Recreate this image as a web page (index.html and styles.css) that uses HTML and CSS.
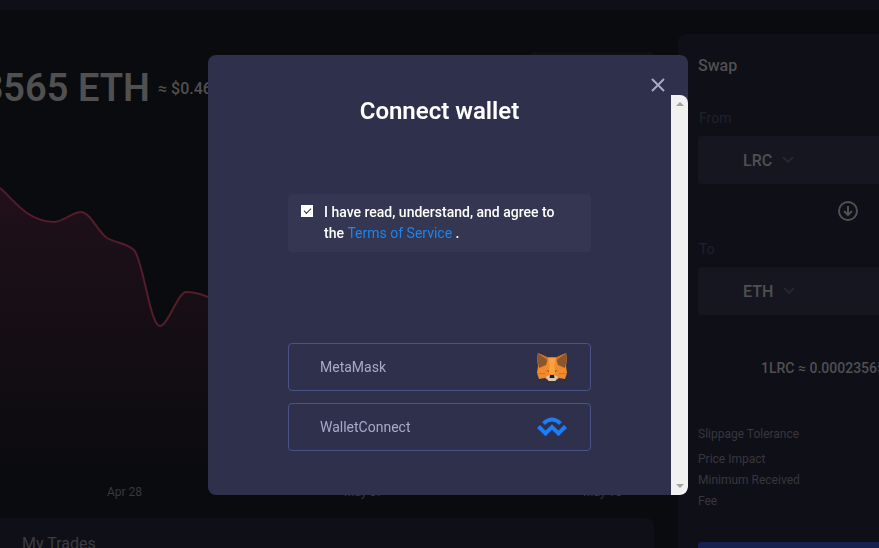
FILE: index.html
```html
<!DOCTYPE html>
<html lang="en">
<head>
  <meta charset="UTF-8" />
  <meta name="viewport" content="width=device-width, initial-scale=1.0" />
  <title>Connect wallet</title>
  <link rel="stylesheet" href="styles.css">
</head>
<body>

  <header class="topbar"></header>

  <main class="layout">
    <div class="market">
      <div class="range"></div>
      <div class="price">
        <strong>0.00023565 ETH</strong>
        <span>≈ $0.4621</span>
      </div>

      <!-- Price chart -->
      <svg class="chart" viewBox="0 0 654 348" preserveAspectRatio="none">
        <defs>
          <linearGradient id="fade" x1="0" y1="0" x2="0" y2="1">
            <stop offset="0" stop-color="#20101a" />
            <stop offset="1" stop-color="#0a0b0f" />
          </linearGradient>
        </defs>
        <path fill="url(#fade)" d="M0 56C9 64 18 75 27 81C36 87 45 90 54 90C63 90 72 80 81 80C90 80 98 100 107 106C116 111 127 111 134 118C143 127 150 194 160 194C168 194 178 160 186 160C194 160 201 162 208 165L654 165V348H0Z" />
        <path class="chart-line" d="M0 56C9 64 18 75 27 81C36 87 45 90 54 90C63 90 72 80 81 80C90 80 98 100 107 106C116 111 127 111 134 118C143 127 150 194 160 194C168 194 178 160 186 160C194 160 201 162 208 165" />
      </svg>
      <div class="axis">
        <span>Apr 28</span>
        <span>May 07</span>
        <span>May 16</span>
      </div>

      <section class="trades">
        <h2>My Trades</h2>
      </section>
    </div>

    <section class="swap">
      <h2>Swap</h2>
      <p class="side">From</p>
      <button class="token">LRC
        <svg width="12" height="8" viewBox="0 0 12 8"><path d="M1 1l5 5 5-5" /></svg>
      </button>
      <button class="switch" aria-label="Switch tokens">
        <svg width="20" height="20" viewBox="0 0 20 20"><circle cx="10" cy="10" r="9" /><path d="M10 5v9M6 10l4 4 4-4" /></svg>
      </button>
      <p class="side">To</p>
      <button class="token">ETH
        <svg width="12" height="8" viewBox="0 0 12 8"><path d="M1 1l5 5 5-5" /></svg>
      </button>
      <p class="rate">1LRC ≈ 0.00023565 ETH</p>
      <ul class="details">
        <li>Slippage Tolerance</li>
        <li>Price Impact</li>
        <li>Minimum Received</li>
        <li>Fee</li>
      </ul>
      <button class="submit" aria-label="Swap tokens"></button>
    </section>
  </main>

  <!-- Connect wallet modal -->
  <div class="overlay">
    <div class="modal" role="dialog" aria-labelledby="modal-title">
      <div class="modal-head">
        <button class="close" aria-label="Close">
          <svg width="14" height="14" viewBox="0 0 14 14"><path d="M1 1l12 12M13 1L1 13" /></svg>
        </button>
      </div>
      <div class="modal-body">
        <div class="modal-content">
          <h1 id="modal-title">Connect wallet</h1>
          <div class="agree">
            <input type="checkbox" id="agree" checked>
            <label for="agree">I have read, understand, and agree to the <a href="#">Terms of Service</a> .</label>
          </div>
          <div class="wallets">
            <button class="wallet">MetaMask
              <svg width="30" height="28" viewBox="0 0 30 28">
                <path fill="#f08a2c" d="M1 0l10 4.500h8L29 0l1 5-1 8 1 7-2 6-6-1-4 3h-6l-4-3-6 1-2-6 1-7-1-8z" />
                <path fill="#f9a03f" d="M11 4.500h8l-1.500 8L18 21h-6l.5-8.500z" />
                <path fill="#8a562b" d="M1 0l9.500 7-1.500 5-7 3L0 5zM29 0l-9.500 7 1.500 5 7 3L30 5z" />
                <path fill="#c9701f" d="M1 0l10 4.500-.5 2.500zM29 0L19 4.500l.5 2.500z" />
                <path fill="#d9731f" d="M0 20h8v1H0zM22 20h8v1h-8z" />
                <path fill="#4b4238" d="M9 17l3 1v1zM21 17l-3 1v1z" />
                <path fill="#d7c9bd" d="M9 24l3.500-2h5l3.500 2-3 4h-6z" />
                <path fill="#20201f" d="M13 22h4l.5 3h-5z" />
              </svg>
            </button>
            <button class="wallet">WalletConnect
              <svg width="30" height="20" viewBox="0 0 30 20">
                <path class="wc" d="M6.500 6.500Q15-1.500 23.500 6.500M1.500 9.500l7 7L15 10l6.500 6.500 7-7" />
              </svg>
            </button>
          </div>
        </div>
        <div class="scrollbar"><i class="up"></i><i class="down"></i></div>
      </div>
    </div>
  </div>

</body>
</html>
```
FILE: styles.css
```css
* {
  box-sizing: border-box;
}

body {
  margin: 0;
  min-height: 100vh;
  overflow: hidden;
  font-family: Roboto, 'Liberation Sans', sans-serif;
  font-size: 14px;
  background: #0a0b0f;
  color: #505050;
}

h1, h2, p, ul {
  margin: 0;
  padding: 0;
}

button {
  font: inherit;
  color: inherit;
  border: none;
  background: none;
  padding: 0;
  text-align: left;
}

svg {
  display: block;
  fill: none;
}

.topbar {
  height: 10px;
  background: #0f0f18;
}

/* the swap panel runs past the right edge of the window */
.layout {
  display: grid;
  grid-template-columns: minmax(0, 1fr) 340px;
  gap: 24px;
  height: calc(100vh - 10px);
  margin-right: -139px;
  overflow: hidden;
}

.market {
  padding-top: 42px;
}

.range {
  width: 124px;
  height: 12px;
  margin-left: auto;
  border-radius: 4px;
  background: #0f0f18;
}

.price {
  display: flex;
  align-items: center;
  gap: 8px;
  height: 48px;
  margin-left: -150px;
  white-space: nowrap;
}

.price strong {
  width: 300px;
  font-size: 38px;
  font-weight: 600;
  text-align: right;
}

.price span {
  font-size: 16px;
  font-weight: 500;
}

.chart {
  width: 100%;
  height: 348px;
  margin-top: 20px;
}

.chart-line {
  stroke: #541d29;
  stroke-width: 2;
}

.axis {
  display: grid;
  grid-template-columns: repeat(3, 1fr);
  height: 34px;
  margin: 4px -68px 0 5px;
  font-size: 12px;
  line-height: 16px;
  text-align: center;
  color: #38393c;
}

.trades {
  height: 80px;
  padding: 14px 22px;
  border-radius: 0 8px 0 0;
  background: #0f0f18;
}

.trades h2 {
  font-size: 16px;
  font-weight: 400;
  line-height: 24px;
  color: #3c3c40;
}

.swap {
  display: flex;
  flex-direction: column;
  margin-top: 24px;
  padding: 20px;
  border-radius: 8px 8px 0 0;
  background: #0f0f18;
}

.swap h2 {
  font-size: 16px;
  font-weight: 500;
  line-height: 24px;
}

.side {
  margin-top: 28px;
  padding-left: 1px;
  line-height: 24px;
  color: #1e222c;
}

.token {
  display: flex;
  align-items: center;
  gap: 10px;
  height: 48px;
  margin-top: 6px;
  padding-left: 45px;
  border-radius: 4px;
  background: #15161f;
  font-size: 16px;
  font-weight: 500;
}

.token svg {
  stroke: #222731;
  stroke-width: 2;
}

.switch {
  align-self: center;
  margin-top: 17px;
}

.switch svg {
  stroke: currentColor;
  stroke-width: 2;
}

.switch + .side {
  margin-top: 16px;
}

.rate {
  margin-top: 41px;
  padding-right: 20px;
  font-weight: 500;
  line-height: 24px;
  text-align: center;
}

.details {
  margin-top: 44px;
  list-style: none;
  font-size: 12px;
  line-height: 21px;
  color: #37373d;
}

.details li:first-child {
  margin-bottom: 4px;
}

.submit {
  height: 48px;
  margin-top: 30px;
  border-radius: 4px;
  background: #172150;
}

/* Modal */
.overlay {
  position: fixed;
  inset: 0;
  display: flex;
  align-items: center;
  justify-content: center;
  padding: 2px 0 0 17px;
}

.modal {
  width: 480px;
  border-radius: 8px;
  background: #2f304b;
  overflow: hidden;
}

.modal-head {
  display: flex;
  justify-content: flex-end;
  height: 40px;
  padding: 23px 23px 0 0;
}

.close {
  height: 14px;
}

.close svg {
  stroke: #a6abca;
  stroke-width: 2;
}

.modal-body {
  display: flex;
  height: 400px;
}

.modal-content {
  flex: 1;
  padding: 0 80px;
}

.modal-content h1 {
  font-size: 24px;
  font-weight: 600;
  line-height: 32px;
  text-align: center;
  color: #fff;
}

.agree {
  display: flex;
  gap: 10px;
  margin-top: 67px;
  padding: 8px 32px 8px 12px;
  border-radius: 4px;
  background: #353652;
  color: #fff;
  font-weight: 500;
  line-height: 21px;
}

.agree input {
  appearance: none;
  flex: none;
  width: 12px;
  height: 12px;
  margin: 3px 1px 0;
  background: #fff;
}

.agree input:checked::before {
  content: "";
  display: block;
  width: 7px;
  height: 4px;
  margin: 3px 0 0 3px;
  box-sizing: border-box;
  border: solid #2f304b;
  border-width: 0 0 1px 1px;
  transform: rotate(-45deg);
}

.agree a {
  color: #1c85ee;
  font-weight: 400;
  text-decoration: none;
}

.wallets {
  display: grid;
  gap: 12px;
  margin-top: 91px;
}

.wallet {
  display: flex;
  align-items: center;
  justify-content: space-between;
  height: 48px;
  padding: 0 23px 0 31px;
  border: 1px solid #4a5386;
  border-radius: 4px;
  color: #a6abca;
}

.wc {
  stroke: #1c7dfa;
  stroke-width: 4;
}

.scrollbar {
  display: flex;
  flex-direction: column;
  justify-content: space-between;
  align-items: center;
  width: 17px;
  padding: 7px 0;
  border-radius: 0 8px 8px 0;
  background: #f1f1f1;
}

.scrollbar i {
  border: 4px solid transparent;
}

.scrollbar .up {
  border-top-width: 0;
  border-bottom-color: #a3a3a3;
}

.scrollbar .down {
  border-bottom-width: 0;
  border-top-color: #a3a3a3;
}
```
